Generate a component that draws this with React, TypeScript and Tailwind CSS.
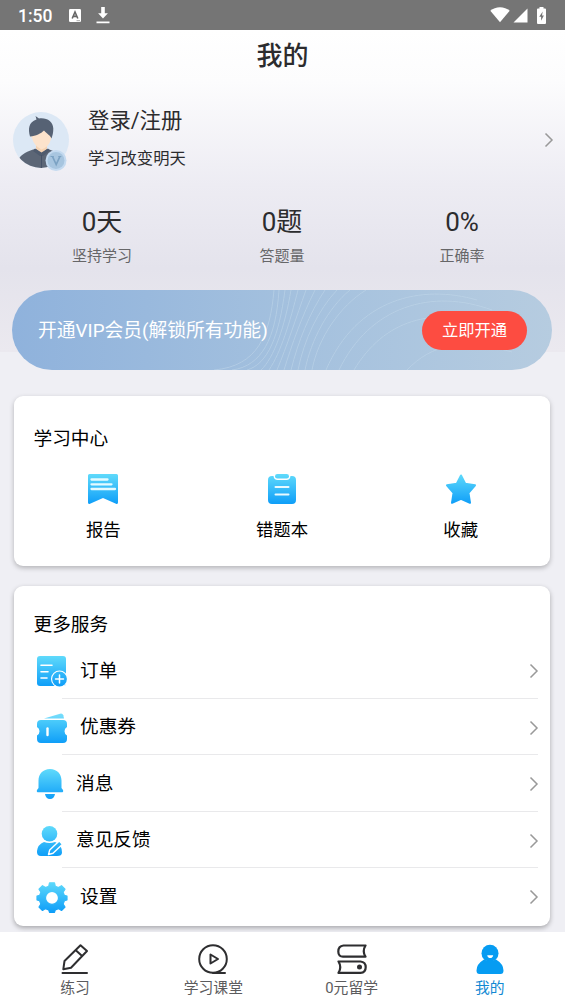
import type { ReactNode } from 'react';

const stats = [
  { value: '0天', label: '坚持学习' },
  { value: '0题', label: '答题量' },
  { value: '0%', label: '正确率' },
];

function Chevron() {
  return (
    <svg className="w-[10px] h-[16px] shrink-0" viewBox="0 0 10 16" fill="none" stroke="#999999" strokeWidth="1.5">
      <path d="M1.5 1.5 8 8l-6.5 6.5" />
    </svg>
  );
}

function StatusBar() {
  return (
    <div className="h-[30px] bg-[#757575] flex items-center pl-[18px] pr-[19px] text-white">
      <span className="text-[17.5px] leading-[30px] font-medium w-[51px] pt-px">1:50</span>
      <svg className="w-[12px] h-[13px]" viewBox="0 0 12 13">
        <rect width="12" height="13" rx="1.2" fill="#fff" />
        <path d="M3.2 9.5 6 3l2.8 6.5M4.3 7.4h3.4" fill="none" stroke="#666" strokeWidth="1.6" />
        <path d="M7.5 11.7h3.5" stroke="#aaa" strokeWidth="1" />
      </svg>
      <svg className="w-[14px] h-[17px] ml-[15px]" viewBox="0 0 14 17" fill="#fff">
        <path d="M5.200 0h3.600v6.200h3.100L7 11.500 2.100 6.200h3.100zM.5 14.600h13v1.700H.5z" />
      </svg>
      <div className="flex-1" />
      <svg className="w-[20px] h-[16px]" viewBox="0 0 20 16" fill="#fff">
        <path d="M10 15.2.3 3.800C3 1.600 6.300.3 10 .3s7 1.300 9.700 3.500z" />
      </svg>
      <svg className="w-[15px] h-[15px] ml-[3px]" viewBox="0 0 15 15" fill="#fff">
        <path d="M14.500.5V14.500H.5z" />
      </svg>
      <svg className="w-[9px] h-[17px] ml-[9px]" viewBox="0 0 9 17">
        <path d="M2.500 0h4v1.600H8q1 0 1 1V16q0 1-1 1H1q-1 0-1-1V2.600q0-1 1-1h1.500z" fill="#fff" />
        <path d="M5.700 4.500 2.200 9.700h1.900v4L6.900 8.600H5z" fill="#757575" />
      </svg>
    </div>
  );
}

function Avatar() {
  return (
    <svg className="w-[58px] h-[62px] shrink-0 mt-[4px]" viewBox="0 0 58 62">
      <defs>
        <clipPath id="face">
          <circle cx="28" cy="29" r="28" />
        </clipPath>
      </defs>
      <circle cx="28" cy="29" r="28" fill="#dce8f5" />
      <g clipPath="url(#face)">
        <path d="M5 49c3-6 10-9 17-11h13c5 2 12 4 16 10v12H5z" fill="#5c6676" />
        <path d="M23 32h11v6l-5.500 5-5.500-5z" fill="#f5d3b3" />
        <path d="m22 37.500 6.500 4 6.500-4 2 2-7 5.500h-3l-7-5z" fill="#4f5b6e" />
        <path d="M28.500 44v14" stroke="#465267" strokeWidth="1" />
      </g>
      <path d="M18 25q3-6 11-6t9.500 6l-.5 3q-2 8-9.500 10.500Q21 35 19 27z" fill="#fce3cc" />
      <path d="M17 25.500C15 18 15.500 11 23.500 8.500L22.500 5l3.500 2.500c8-1 14 3 14.300 10 .1 4-.8 7-1.800 10-1-3-4.500-4.500-7.500-8-3 3-8 5.500-14 6z" fill="#566274" />
      <circle cx="43" cy="49.500" r="10.500" fill="#c4daf0" />
      <circle cx="43" cy="49.500" r="8.500" fill="#a7c5df" />
      <path d="m39.500 45.500 3.700 8 3.700-8" fill="none" stroke="#7ba2c3" strokeWidth="1.700" />
      <path d="M37.500 45.500h3.300M45.300 45.500h3" stroke="#7ba2c3" strokeWidth="1" />
    </svg>
  );
}

function VipBanner() {
  return (
    <div className="relative ml-[12px] mr-[13px] h-[80px] rounded-full overflow-hidden bg-linear-to-r from-[#8fb2dc] via-[#a3c0de] to-[#b6cce0] flex items-center pl-[26px] pr-[25px]">
      <svg className="absolute inset-0 w-full h-full" viewBox="0 0 540 80" fill="none" stroke="#c3d9ec" strokeOpacity=".5" strokeWidth="1">
        <path d="M262 0C258 45 246 76 202 80" />
        <path d="M267 0C264 48 250 76 220 80" />
        <path d="M273 0C267 46 256 74 235 80" />
        <path d="M279 0C273 36 262 68 249 80" />
        <path d="M286 0C278 32 269 62 257 80" />
        <path d="M294 0C284 28 275 56 265 80" />
        <path d="M303 0C290 26 280 54 272 80" />
        <path d="M313 0C297 24 286 52 279 80" />
        <path d="M325 0C306 20 292 50 286 80" />
        <path d="M338 0C316 18 299 50 293 80" />
        <path d="M354 0C328 16 306 48 300 80" />
        <path d="M465 10C410-6 345 8 314 80" />
        <path d="M480 20C420-2 358 16 327 80" />
        <path d="M480 35C420 16 372 30 342 80" />
        <path d="M500 62C450 48 420 54 395 80" />
      </svg>
      <span className="relative flex-1 pt-[3px] text-[18.800px] text-white">开通VIP会员(解锁所有功能)</span>
      <button className="relative w-[105px] h-[39px] pt-[2px] rounded-full bg-[#fd4c41] text-white text-[16.300px]">立即开通</button>
    </div>
  );
}

// shared top-to-bottom blue fill for the coloured icons
function BlueIcon({ id, width, children }: { id: string; width: number; children: ReactNode }) {
  return (
    <svg width={width} height="32" viewBox={`0 0 ${width} 32`} fill={`url(#${id})`} className="shrink-0">
      <defs>
        <linearGradient id={id} gradientUnits="userSpaceOnUse" x1="0" y1="0" x2="0" y2="32">
          <stop offset="0" stopColor="#62dcfb" />
          <stop offset="1" stopColor="#0c9cf8" />
        </linearGradient>
      </defs>
      {children}
    </svg>
  );
}

const studyItems = [
  {
    label: '报告',
    icon: (
      <BlueIcon id="report" width={32}>
        <path d="M2.500 1h27q1.500 0 1.500 1.500v27q0 2-2 1.200L16 25 3 30.700q-2 .8-2-1.200v-27Q1 1 2.500 1z" />
        <path d="M4.500 6.500h16M4.500 11.300h20M4.500 16h23.500" stroke="#e5fbff" strokeWidth="2.300" strokeLinecap="round" />
      </BlueIcon>
    ),
  },
  {
    label: '错题本',
    icon: (
      <BlueIcon id="mistakes" width={32}>
        <path d="M6 3h1.500q.5 4 4 4h9q3.500 0 4-4H26q4 0 4 4v20q0 4-4 4H6q-4 0-4-4V7q0-4 4-4z" />
        <rect x="9" y="1" width="14" height="4.600" rx="2.300" />
        <path d="M9.500 14h13M9.500 21.500h13" stroke="#e8faff" strokeWidth="2" strokeLinecap="round" />
      </BlueIcon>
    ),
  },
  {
    label: '收藏',
    icon: (
      <BlueIcon id="favorite" width={32}>
        <path
          d="m16 2.500 4.200 8.200 9.800 1.600-6.500 7.500 1.500 10-9-4-9 4 1.500-10L2 12.300l9.800-1.600z"
          stroke="url(#favorite)"
          strokeWidth="2"
          strokeLinejoin="round"
        />
      </BlueIcon>
    ),
  },
];

const services = [
  {
    label: '订单',
    icon: (
      <BlueIcon id="order" width={32}>
        <rect x="1" y="1" width="29" height="30" rx="3" />
        <path d="M5 10.300h11M5 16.700h7M5 23h6" stroke="#fff" strokeWidth="1.600" strokeLinecap="round" />
        <circle cx="23.500" cy="24" r="8.500" fill="#fff" />
        <circle cx="23.500" cy="24" r="7.400" />
        <path d="M23.500 20v8M19.500 24h8" stroke="#fff" strokeWidth="1.500" strokeLinecap="round" />
      </BlueIcon>
    ),
  },
  {
    label: '优惠券',
    icon: (
      <BlueIcon id="coupon" width={32}>
        <path d="M8 6.500 24 1.700q2.500-.7 3.300 1.600L28 6.500z" opacity=".85" />
        <path d="M5 8h22q4 0 4 4v3q-2.500 1.500-2.500 4.200T31 23.500V27q0 4-4 4H5q-4 0-4-4v-3.500q2.500-1.500 2.500-4.300T1 15v-3q0-4 4-4z" />
        <path d="M11.500 16.500v6.500" stroke="#fff" strokeWidth="2.400" strokeLinecap="round" />
      </BlueIcon>
    ),
  },
  {
    label: '消息',
    icon: (
      <BlueIcon id="message" width={28}>
        <path d="M14 1c7 0 11.500 5 11.500 11.500V20l1.500 2q.8 2.300-1.500 2.300h-23Q.2 24.300 1 22l1.500-2v-7.500C2.500 6 7 1 14 1zM9 26h10q-.8 5-5 5t-5-5z" />
      </BlueIcon>
    ),
  },
  {
    label: '意见反馈',
    icon: (
      <BlueIcon id="feedback" width={28}>
        <circle cx="13.500" cy="8.800" r="7.800" />
        <path d="M8 17q5.500 2.200 11 0 7 2.500 7 10.500 0 3.500-5 3.500H5q-4.500 0-4-5 .7-6.500 7-9z" />
        <path d="m12.500 29.500 1.200-4.500 9.500-9 3.300 3.300-9.500 9z" stroke="#fff" strokeWidth="1.400" strokeLinejoin="round" />
      </BlueIcon>
    ),
  },
  {
    label: '设置',
    icon: (
      <BlueIcon id="settings" width={32}>
        <path
          fillRule="evenodd"
          stroke="url(#settings)"
          strokeWidth="1.200"
          strokeLinejoin="round"
          d="M13.500 1.800h5l.8 3.500 3.200 1.300 3-1.900 3.500 3.500-1.900 3 1.300 3.200 2.600.6v4l-2.600.8-1.300 3.200 1.900 3-3.500 3.500-3-1.900-3.200 1.300-.8 2.400h-5l-.8-2.400-3.200-1.300-3 1.900L3 26l1.900-3-1.300-3.200L1 19v-4l2.600-.6 1.300-3.200-1.900-3 3.500-3.500 3 1.900 3.200-1.300zM16 10.400a6.500 6.500 0 1 0 0 13 6.500 6.500 0 0 0 0-13z"
        />
      </BlueIcon>
    ),
  },
];

const tabs = [
  {
    label: '练习',
    icon: (
      <svg className="w-[30px] h-[32px]" viewBox="0 0 30 32" fill="none" stroke="#2e2e30" strokeWidth="2" strokeLinejoin="round" strokeLinecap="round">
        <path d="M20.500 2.200 27 8 11 24.700l-7.700 1.600L4.500 18zM15.800 7.200l6.300 5.800M2.500 30h24.500" />
      </svg>
    ),
  },
  {
    label: '学习课堂',
    icon: (
      <svg className="w-[30px] h-[32px]" viewBox="0 0 30 32" fill="none" stroke="#2e2e30" strokeWidth="2" strokeLinejoin="round" strokeLinecap="round">
        <circle cx="15" cy="16" r="13.800" />
        <path d="M15 30h12M12.500 11.500v9l7.500-4.500z" />
      </svg>
    ),
  },
  {
    label: '0元留学',
    icon: (
      <svg className="w-[30px] h-[32px]" viewBox="0 0 30 32" fill="none" stroke="#2e2e30" strokeWidth="2.200" strokeLinejoin="round" strokeLinecap="round">
        <path d="M28.500 2.500H6.500Q1.300 3 1.300 8.500t5.200 5.200h22q-3.500-5.500 0-11.200zM1.500 18.500h22q5.200.5 5.200 5.700t-5.200 5.700h-22q3.500-5.700 0-11.400z" />
        <circle cx="22.500" cy="24" r="1.400" fill="#2e2e30" />
      </svg>
    ),
  },
  {
    label: '我的',
    active: true,
    icon: (
      <svg className="w-[30px] h-[32px]" viewBox="0 0 30 32" fill="#069cf2">
        <circle cx="15" cy="10.200" r="8.500" />
        <path d="M9 16.500q6 2.500 12 0 7.500 4.500 7.500 11 0 3.500-3 3.500h-21q-3 0-3-3.500 0-6.500 7.500-11z" />
        <path d="M12.200 12.200h6q-.5 2.800-3 2.800t-3-2.800z" fill="#fff" />
      </svg>
    ),
  },
];

export default function App() {
  return (
    <div className="w-[565px] h-[1004px] overflow-hidden flex flex-col bg-[#efeff4] font-['Roboto','Noto_Sans_CJK_SC',sans-serif] text-[#2c2c2e]">
      <StatusBar />

      <main className="h-[902px] overflow-hidden">
        <div className="h-[322px] bg-[linear-gradient(180deg,#fff_0%,#fcfcfd_16%,#edecf3_48%,#e4e3ec_74%,#ebe9ef_100%)]">
          <h1 className="h-[50px] leading-[52px] text-center text-[26px] font-medium">我的</h1>

          <div className="flex items-center h-[100px] pl-[13px] pr-[11px] pt-[20px]">
            <Avatar />
            <div className="flex-1 pl-[17px]">
              <p className="text-[21.400px] leading-[38px]">登录/注册</p>
              <p className="text-[16.300px] leading-[38px]">学习改变明天</p>
            </div>
            <Chevron />
          </div>

          <div className="grid grid-cols-3 h-[110px] ml-[12px] mr-[13px] pt-[24px] text-center">
            {stats.map(s => (
              <div key={s.label}>
                <p className="text-[26px] leading-[36px]">{s.value}</p>
                <p className="text-[15px] leading-[32px] text-[#666668]">{s.label}</p>
              </div>
            ))}
          </div>

          <VipBanner />
        </div>

        <section className="ml-[14px] mr-[15px] mt-[44px] h-[170px] rounded-[9px] bg-white shadow-[0_2px_5px_rgba(0,0,0,0.25)] text-black">
          <h2 className="pt-[25px] pl-[19.500px] text-[18.700px] leading-[36px]">学习中心</h2>
          <div className="grid grid-cols-3 pt-[16px]">
            {studyItems.map(item => (
              <div key={item.label} className="flex flex-col items-center">
                {item.icon}
                <span className="mt-[10px] text-[17.400px] leading-[30px]">{item.label}</span>
              </div>
            ))}
          </div>
        </section>

        <section className="ml-[14px] mr-[15px] mt-[20px] h-[340px] rounded-[9px] bg-white shadow-[0_2px_5px_rgba(0,0,0,0.3)] text-black">
          <h2 className="pt-[21px] pl-[19.500px] h-[56px] text-[18.700px] leading-[36px]">更多服务</h2>
          {services.map((item, i) => (
            <div key={item.label}>
              <div className="flex items-center h-[55.500px] pl-[22px] pr-[11px] pt-[3px]">
                {item.icon}
                <span className="flex-1 pl-[12px] pb-px text-[18.700px]">{item.label}</span>
                <Chevron />
              </div>
              {i < services.length - 1 && <div className="h-px ml-[48px] mr-[12px] bg-[#e9e9eb]" />}
            </div>
          ))}
        </section>
      </main>

      <nav className="relative flex-1 grid grid-cols-4 px-[6px] bg-white">
        {tabs.map(tab => (
          <div key={tab.label} className="flex flex-col items-center pt-[11px]">
            {tab.icon}
            <span className={`text-[14.800px] leading-[27px] ${tab.active ? 'text-[#1289d3]' : 'text-[#5c5c5e]'}`}>{tab.label}</span>
          </div>
        ))}
      </nav>
    </div>
  );
}
